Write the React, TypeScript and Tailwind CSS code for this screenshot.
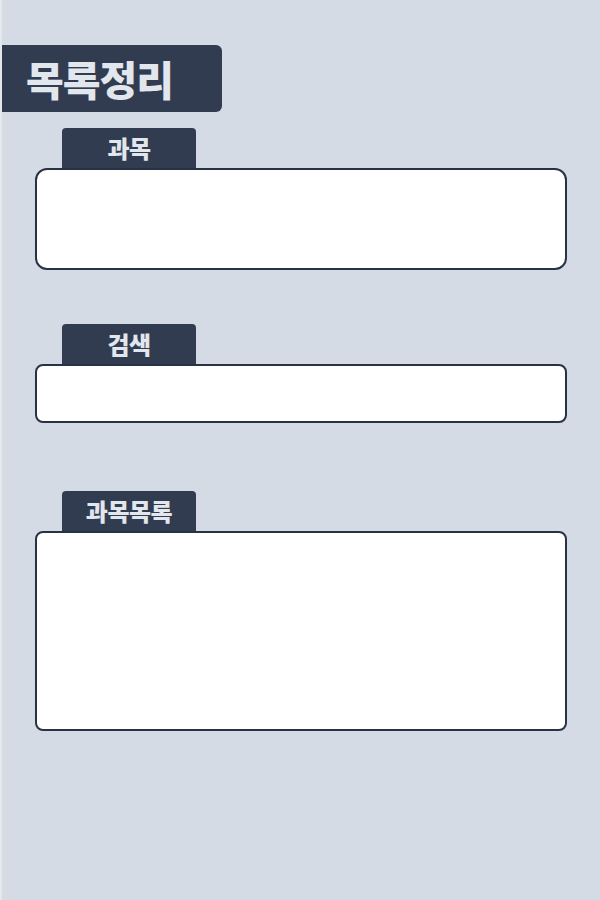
export default function App() {
  const sections = [
    { label: '과목', height: 'h-[102px]', radius: 'rounded-xl', mt: 'mt-[16px]' },
    { label: '검색', height: 'h-[59px]', radius: 'rounded-lg', mt: 'mt-[54px]' },
    { label: '과목목록', height: 'h-[200px]', radius: 'rounded-lg', mt: 'mt-[68px]' },
  ];

  return (
    <div
      className="w-[600px] h-[900px] bg-[#e4e7ec] pl-[2px]"
      style={{ fontFamily: '"Noto Sans CJK KR", "Noto Sans", sans-serif' }}
    >
      <div className="h-full bg-[#d5dbe5] pt-[45px]">
        {/* Title */}
        <div className="w-[220px] h-[67px] bg-[#313c50] rounded-r-md flex items-center pl-[24px]">
          <h1 className="text-[41px] font-black text-[#e2e6ed] leading-none tracking-[-1px]">목록정리</h1>
        </div>

        {/* Sections */}
        {sections.map((s) => (
          <div key={s.label} className={`${s.mt} pl-[33px] pr-[33px]`}>
            <div className="ml-[27px] w-[134px] h-[40px] bg-[#313c50] rounded-t-[4px] flex items-center justify-center">
              <span className="text-[24px] font-black text-[#e2e6ed] leading-none tracking-[-0.5px]">{s.label}</span>
            </div>
            <div className={`${s.height} ${s.radius} bg-white border-2 border-[#283246]`} />
          </div>
        ))}
      </div>
    </div>
  );
}
